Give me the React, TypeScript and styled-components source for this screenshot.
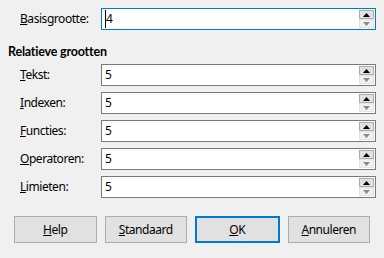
import React from 'react';
import styled, { createGlobalStyle } from 'styled-components';

const GlobalStyle = createGlobalStyle`
  html, body {
    margin: 0;
    padding: 0;
    background: #f0f0f0;
  }
  body {
    font-family: "Noto Sans", "Open Sans", sans-serif;
    font-size: 12px;
    letter-spacing: -0.45px;
    color: #000;
  }
`;

const Dialog = styled.div`
  width: 384px;
  height: 258px;
  box-sizing: border-box;
  padding-top: 8px;
  display: flex;
  flex-direction: column;
`;

const FieldRow = styled.div`
  display: flex;
  align-items: center;
  height: 22px;
  padding-left: 20px;
  padding-right: 8px;
`;

const Label = styled.label`
  width: 81px;
  flex: none;
  line-height: 16px;
`;

const Heading = styled.div`
  font-family: Lato, "Noto Sans", sans-serif;
  font-size: 12.5px;
  font-weight: bold;
  letter-spacing: -0.2px;
  margin: 14px 0 4px 8px;
  line-height: 16px;
`;

const Rows = styled.div`
  display: flex;
  flex-direction: column;
  gap: 6px;
`;

const Field = styled.div<{ $focused?: boolean }>`
  flex: 1;
  height: 22px;
  box-sizing: border-box;
  background: #fff;
  border: 1px solid ${p => (p.$focused ? '#0078d7' : '#7a7a7a')};
  display: flex;
  align-items: center;
  padding: 1px 1px 1px 2px;
`;

const Value = styled.span`
  flex: 1;
  display: flex;
  align-items: center;
  line-height: 16px;
  padding-left: 1px;
`;

const Caret = styled.span`
  display: inline-block;
  width: 1px;
  height: 18px;
  background: #000;
`;

const Spin = styled.div`
  width: 15px;
  height: 18px;
  display: flex;
  flex-direction: column;
`;

const SpinButton = styled.div<{ $active?: boolean }>`
  flex: 1;
  box-sizing: border-box;
  border: 1px solid ${p => (p.$active ? '#adadad' : '#e3e3e3')};
  background: ${p => (p.$active ? '#e1e1e1' : '#f0f0f0')};
  display: flex;
  align-items: center;
  justify-content: center;
`;

const ButtonBar = styled.div`
  display: flex;
  gap: 8px;
  padding: 0 14px;
  margin-top: 18px;
`;

const Button = styled.button<{ $default?: boolean }>`
  flex: 1;
  height: 27px;
  box-sizing: border-box;
  font: inherit;
  letter-spacing: inherit;
  color: #000;
  background: #e1e1e1;
  border: ${p => (p.$default ? '2px solid #0078d7' : '1px solid #adadad')};
  padding: 0;
`;

const Arrow = ({ up }: { up?: boolean }) => (
  <svg width="7" height="4" viewBox="0 0 7 4">
    {up ? <polygon points="0,4 7,4 3.5,0" fill="#000" /> : <polygon points="0,0 7,0 3.5,4" fill="#8a8a8a" />}
  </svg>
);

const SpinField = ({ value, focused }: { value: string; focused?: boolean }) => (
  <Field $focused={focused}>
    <Value>
      {focused && <Caret />}
      {value}
    </Value>
    <Spin>
      <SpinButton $active>
        <Arrow up />
      </SpinButton>
      <SpinButton>
        <Arrow />
      </SpinButton>
    </Spin>
  </Field>
);

const rows: [string, string][] = [
  ['T', 'ekst:'],
  ['I', 'ndexen:'],
  ['F', 'uncties:'],
  ['O', 'peratoren:'],
  ['L', 'imieten:'],
];

export default function App() {
  return (
    <>
      <GlobalStyle />
      <Dialog>
        <FieldRow>
          <Label><u>B</u>asisgrootte:</Label>
          <SpinField value="4" focused />
        </FieldRow>
        <Heading>Relatieve grootten</Heading>
        <Rows>
          {rows.map(([key, rest]) => (
            <FieldRow key={key}>
              <Label><u>{key}</u>{rest}</Label>
              <SpinField value="5" />
            </FieldRow>
          ))}
        </Rows>
        <ButtonBar>
          <Button><u>H</u>elp</Button>
          <Button><u>S</u>tandaard</Button>
          <Button $default><u>O</u>K</Button>
          <Button><u>A</u>nnuleren</Button>
        </ButtonBar>
      </Dialog>
    </>
  );
}
